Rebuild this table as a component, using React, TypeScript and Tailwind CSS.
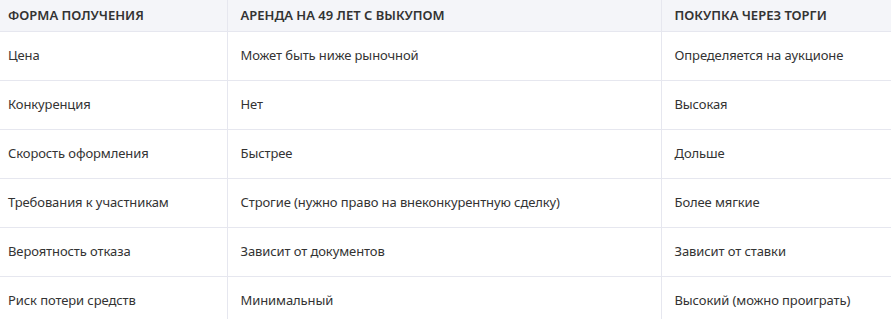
const rows: [string, string, string][] = [
  ["Цена", "Может быть ниже рыночной", "Определяется на аукционе"],
  ["Конкуренция", "Нет", "Высокая"],
  ["Скорость оформления", "Быстрее", "Дольше"],
  ["Требования к участникам", "Строгие (нужно право на внеконкурентную сделку)", "Более мягкие"],
  ["Вероятность отказа", "Зависит от документов", "Зависит от ставки"],
  ["Риск потери средств", "Минимальный", "Высокий (можно проиграть)"],
];

export default function App() {
  return (
    <div className="w-[891px] h-[319px] overflow-hidden bg-white font-['Noto_Sans',sans-serif] text-[13px] text-[#333]">
      <table className="w-[920px] border-collapse table-fixed">
        <colgroup>
          <col className="w-[227px]" />
          <col className="w-[434px]" />
          <col />
        </colgroup>
        <thead>
          <tr className="h-[31px] bg-[#f4f5f9]">
            <th className="pl-2 text-left font-semibold uppercase border-b border-[#e6e7ef]">Форма получения</th>
            <th className="pl-[13px] text-left font-semibold uppercase border-b border-l border-[#e6e7ef]">Аренда на 49 лет с выкупом</th>
            <th className="pl-[13px] text-left font-semibold uppercase border-b border-l border-[#e6e7ef]">Покупка через торги</th>
          </tr>
        </thead>
        <tbody className="tracking-[-0.1px]">
          {rows.map((r) => (
            <tr key={r[0]} className="h-[49px]">
              <td className="pl-2 border-b border-[#e6e7ef]">{r[0]}</td>
              <td className="pl-[13px] border-b border-l border-[#e6e7ef]">{r[1]}</td>
              <td className="pl-[13px] border-b border-l border-[#e6e7ef]">{r[2]}</td>
            </tr>
          ))}
        </tbody>
      </table>
    </div>
  );
}
